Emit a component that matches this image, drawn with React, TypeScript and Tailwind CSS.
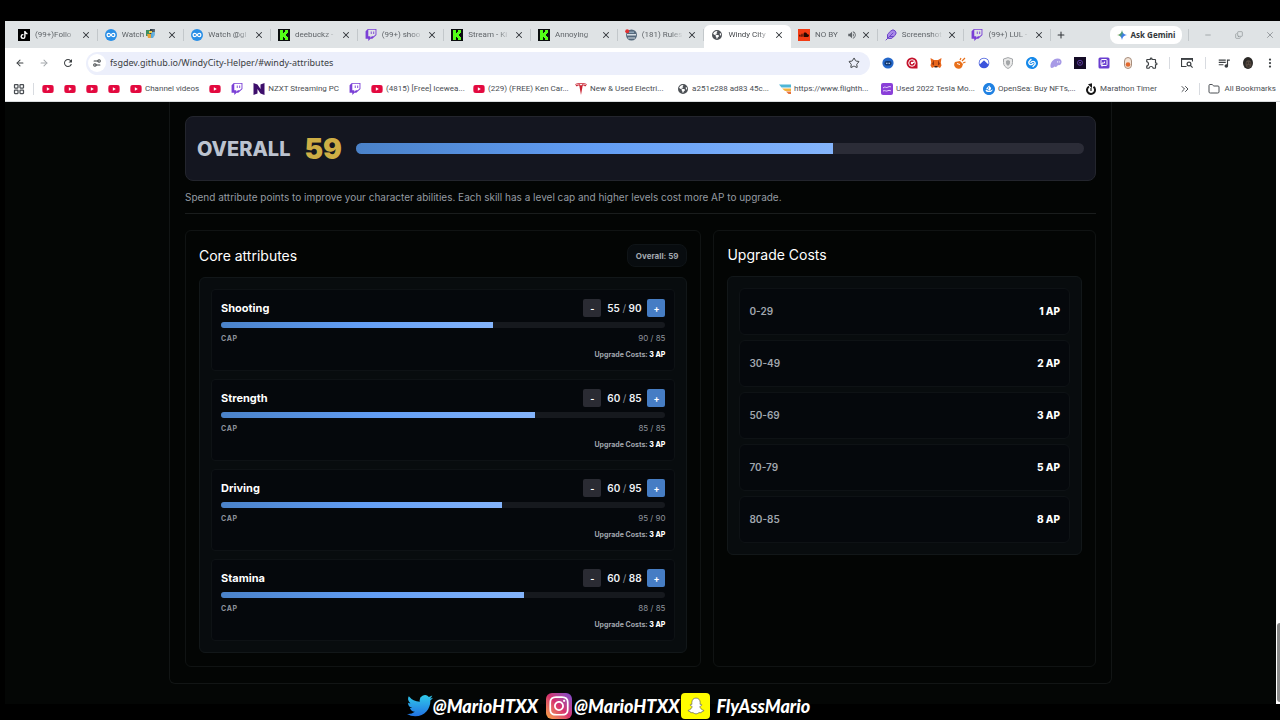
import { useState } from "react";
import type { ReactNode } from "react";
import {
  ArrowLeft,
  ArrowRight,
  ChevronsRight,
  Copy,
  EllipsisVertical,
  Feather,
  Folder,
  LayoutGrid,
  Minus,
  Plus,
  Settings2,
  Star,
  X,
} from "lucide-react";
import { FaEarthAmericas, FaInstagram, FaSoundcloud, FaTiktok, FaTwitch, FaYoutube } from "react-icons/fa6";
import { MdOutlineExtension, MdQueueMusic, MdRefresh, MdVolumeUp } from "react-icons/md";
import { SiOpensea, SiShazam, SiTesla } from "react-icons/si";

const KickIcon = () => (
  <svg viewBox="0 0 12 12" className="size-3">
    <rect width="12" height="12" fill="#0b0e0f" />
    <path d="M2 1h3v3h1V3h1V1h3v3H9v1H8v2h1v1h1v3H7V9H6V8H5v3H2z" fill="#53fc18" />
  </svg>
);

const LoopIcon = () => (
  <svg viewBox="0 0 12 12" className="size-3">
    <circle cx="6" cy="6" r="6" fill="#2a8fe6" />
    <path
      d="M6 6C5 4.600 4.500 4.300 3.800 4.300a1.700 1.700 0 0 0 0 3.400C4.500 7.700 5 7.400 6 6s1.500-1.700 2.200-1.700a1.700 1.700 0 0 1 0 3.400C7.500 7.700 7 7.400 6 6z"
      fill="none"
      stroke="#fff"
      strokeWidth="1.200"
    />
  </svg>
);

const RulesIcon = () => (
  <svg viewBox="0 0 12 12" className="size-3">
    <circle cx="6.500" cy="6" r="5.500" fill="#55697c" />
    <path d="M2 5h9v1.500H2zM3 8.500h7v1H3z" fill="#d5dde4" />
    <path d="M4 2.500h5v1.500H4z" fill="#8ea5b8" />
    <circle cx="2.200" cy="2.200" r="2" fill="#e03131" />
  </svg>
);

const CharactersIcon = () => (
  <svg viewBox="0 0 10 10" className="inline size-2.5 align-[-2px]">
    <rect width="5" height="6" y="1" fill="#3d8f5f" />
    <rect x="4" width="5" height="5" fill="#2b3a45" />
    <path d="M1 5h4v4H2z" fill="#e8a33a" />
    <path d="M6 3h3v3l-2 3H5V5z" fill="#4aa3d8" />
    <path d="M3 2h3v2H3z" fill="#f2cf4a" />
  </svg>
);

const SoundCloudIcon = () => (
  <span className="flex size-3 items-center justify-center bg-[#f23c14]">
    <FaSoundcloud className="size-2.5 text-[#260802]" />
  </span>
);

const YouTube = () => <FaYoutube className="size-3 text-[#e3093f]" />;
const Twitch = () => <FaTwitch className="size-3 text-[#7a3fd6]" />;

type Tab = { title: ReactNode; icon: ReactNode; active?: boolean; audio?: boolean };

const tabs: Tab[] = [
  {
    title: "(99+)Follo",
    icon: (
      <span className="flex size-3 items-center justify-center bg-black">
        <FaTiktok className="size-2 text-white" />
      </span>
    ),
  },
  { title: <>Watch <CharactersIcon /></>, icon: <LoopIcon /> },
  { title: "Watch @gl", icon: <LoopIcon /> },
  { title: "deebuckz -", icon: <KickIcon /> },
  { title: "(99+) shoo", icon: <Twitch /> },
  { title: "Stream - Ki", icon: <KickIcon /> },
  { title: "Annoying", icon: <KickIcon /> },
  { title: "(181) Rules", icon: <RulesIcon /> },
  { title: "Windy City", icon: <FaEarthAmericas className="size-2.5 text-[#4d5156]" />, active: true },
  { title: "NO BY", icon: <SoundCloudIcon />, audio: true },
  { title: "Screenshot", icon: <Feather className="size-3 fill-[#a98be8] text-[#6d45c9]" /> },
  { title: "(99+) LUL -", icon: <Twitch /> },
];

function TabStrip() {
  return (
    <div className="flex h-[27px] items-end bg-[#dfe3e5] pl-1.5 text-[#5f6468]">
      <div role="tablist" className="flex min-w-0 flex-1">
        {tabs.map((tab, i) => (
          <div
            key={i}
            role="tab"
            aria-selected={!!tab.active}
            className={
              tab.active
                ? "flex h-[23px] min-w-0 flex-1 rounded-t-md bg-white pb-[3px] text-[#46494d]"
                : "flex h-[23px] min-w-0 flex-1 pb-[3px]"
            }
          >
            <div
              className={
                tab.active
                  ? "my-1 flex min-w-0 flex-1 items-center pr-[7px] pl-1.5"
                  : "my-1 flex min-w-0 flex-1 items-center border-r border-[#c3c8cb] pr-1.5 pl-1.5"
              }
            >
              <span className="flex w-3.5 shrink-0 justify-center">{tab.icon}</span>
              <span className="ml-1 min-w-0 flex-1 overflow-hidden text-[8px] leading-3 whitespace-nowrap [mask-image:linear-gradient(to_right,black_70%,transparent)]">
                {tab.title}
              </span>
              {tab.audio && <MdVolumeUp className="size-2.5 shrink-0" />}
              <button aria-label="Close tab" className="ml-1 shrink-0 text-[#33373b]">
                <X className="size-2.5" strokeWidth={2.5} />
              </button>
            </div>
          </div>
        ))}
      </div>
      <div className="flex h-[27px] shrink-0 items-center">
        <button aria-label="New tab" className="flex w-5 justify-center text-[#33373b]">
          <Plus className="size-2.5" strokeWidth={2.5} />
        </button>
        <button className="ml-[39px] flex h-[18px] w-[72px] items-center justify-center gap-1 rounded-lg bg-white font-['Noto_Sans',sans-serif] text-[8px] font-bold text-[#33373b]">
          <svg viewBox="0 0 12 12" className="size-2.5">
            <defs>
              <linearGradient id="spark" x1="0" y1="0.200" x2="1" y2="0.800">
                <stop offset="0" stopColor="#e5a72c" />
                <stop offset="0.350" stopColor="#4a9d6e" />
                <stop offset="0.600" stopColor="#3b7ced" />
                <stop offset="1" stopColor="#2f64d8" />
              </linearGradient>
            </defs>
            <path d="M6 0c.5 3.600 2.400 5.500 6 6-3.600.5-5.500 2.400-6 6-.5-3.600-2.400-5.500-6-6 3.600-.5 5.500-2.400 6-6z" fill="url(#spark)" />
          </svg>
          Ask Gemini
        </button>
        <span className="ml-1.5 h-3 w-px bg-[#c3c8cb]" />
        <div className="ml-[9px] flex gap-[11px] text-[#8a8f93]">
          <button aria-label="Minimize" className="flex w-5 items-center justify-center">
            <Minus className="size-2" />
          </button>
          <button aria-label="Restore" className="flex w-5 items-center justify-center">
            <Copy className="size-2 -scale-x-100 rotate-180" />
          </button>
          <button aria-label="Close" className="flex w-5 items-center justify-center">
            <X className="size-2.5" />
          </button>
        </div>
      </div>
    </div>
  );
}

const extensions: { name: string; icon: ReactNode }[] = [
  {
    name: "Robot",
    icon: (
      <svg viewBox="0 0 12 12" className="size-3">
        <circle cx="6" cy="6" r="5.600" fill="#2467c9" />
        <rect x="2.500" y="4" width="7" height="4.500" rx="2" fill="#12386f" />
        <path d="M4 6.300h1.500M6.500 6.300H8" stroke="#cfe2ff" />
      </svg>
    ),
  },
  {
    name: "Target",
    icon: (
      <svg viewBox="0 0 12 12" className="size-3">
        <path d="M6 .5a5.500 5.500 0 1 0 0 11h5.500V6A5.500 5.500 0 0 0 6 .5z" fill="#c4132c" />
        <circle cx="6" cy="6" r="3.300" fill="none" stroke="#fff" />
        <path d="M6 6l2.500-2.500V6z" fill="#fff" />
        <circle cx="6" cy="6" r="1.200" fill="#fff" />
      </svg>
    ),
  },
  {
    name: "Fox",
    icon: (
      <svg viewBox="0 0 12 12" className="size-3">
        <path d="M.5 1l3.500 2h4l3.500-2-.7 4.500.7 3-1.500 2.500L8 10H4l-2 1L.5 8.500l.7-3z" fill="#e8661b" />
        <path d="M4 3L2 7l2 1.500zM8 3l2 4-2 1.500z" fill="#8c3410" />
        <path d="M4.500 9h3v1.500h-3z" fill="#3a2015" />
      </svg>
    ),
  },
  {
    name: "Comet",
    icon: (
      <svg viewBox="0 0 12 12" className="size-3">
        <path d="M1 5l5-1 3 3-1 3a4 4 0 0 1-7-5z" fill="#e8701b" />
        <path d="M6 3l1-2M8 4l3-3M9 6l2.500-1" stroke="#e8701b" strokeWidth="1.200" />
        <path d="M3 6.500l3 1" stroke="#fff" />
      </svg>
    ),
  },
  {
    name: "Peak",
    icon: (
      <svg viewBox="0 0 12 12" className="size-3">
        <circle cx="6" cy="6" r="5.300" fill="#3c55dc" />
        <path d="M1.800 7.500L6 3.500l4.200 4a4.500 4.500 0 1 0-8.400 0z" fill="#fff" />
        <path d="M6 3.500l4 4H2z" fill="#3c55dc" />
      </svg>
    ),
  },
  {
    name: "Shield",
    icon: (
      <svg viewBox="0 0 12 12" className="size-3">
        <path d="M6 .6l4.500 1.400v3.500c0 3-1.800 4.800-4.500 6-2.700-1.200-4.500-3-4.500-6V2z" fill="#e9e9e9" stroke="#a3a6a8" />
        <path d="M6 3l2 1v2c0 1.200-.8 2-2 2.700C4.800 8 4 7.200 4 6V4z" fill="#a3a6a8" />
      </svg>
    ),
  },
  { name: "Shazam", icon: <SiShazam className="size-3 text-[#1689ea]" /> },
  {
    name: "Phantom",
    icon: (
      <svg viewBox="0 0 12 12" className="size-3">
        <path d="M.5 10C0 6 3 1.500 7.500 1.500c3 0 4.500 1.800 4 4C11 8 9.500 8.500 8 8c-1 2-2.500 2.500-3.500 1.500C3.500 11 1 11.500.5 10z" fill="#a79ae6" />
        <path d="M7.500 4.300v1.200M9.300 4.300v1.200" stroke="#fff" strokeWidth=".8" />
      </svg>
    ),
  },
  {
    name: "Orbit",
    icon: (
      <svg viewBox="0 0 12 12" className="size-3">
        <rect width="12" height="12" fill="#140b26" />
        <circle cx="6" cy="5.800" r="2.500" fill="none" stroke="#5a3aa0" />
        <circle cx="6" cy="5.800" r=".8" fill="#7d5ac8" />
      </svg>
    ),
  },
  {
    name: "Pretzel",
    icon: (
      <svg viewBox="0 0 12 12" className="size-3">
        <rect x=".5" y=".5" width="11" height="11" rx="1.500" fill="#6a3fd0" />
        <rect x="3" y="2.500" width="6" height="6" rx="1" fill="none" stroke="#fff" />
        <path d="M4 9.500V6h2.500V4.500" fill="none" stroke="#fff" />
      </svg>
    ),
  },
  {
    name: "Capsule",
    icon: (
      <svg viewBox="0 0 12 12" className="size-3">
        <rect x="2.500" y=".5" width="7" height="11" rx="3.500" fill="#f3e3d6" stroke="#a68d7c" />
        <circle cx="6" cy="7.500" r="2.300" fill="#e2672d" />
      </svg>
    ),
  },
  { name: "Extensions", icon: <MdOutlineExtension className="size-3.5 text-[#3c4043]" /> },
];

function Toolbar() {
  return (
    <div className="flex h-[30px] items-center bg-white pl-[3px] text-[#3c4043]">
      <button aria-label="Back" className="flex w-6 justify-center">
        <ArrowLeft className="size-2.5" strokeWidth={2.5} />
      </button>
      <button aria-label="Forward" className="flex w-6 justify-center text-[#a3a7ab]">
        <ArrowRight className="size-2.5" strokeWidth={2.5} />
      </button>
      <button aria-label="Reload" className="flex w-6 justify-center">
        <MdRefresh className="size-3" />
      </button>
      <div className="ml-1.5 flex h-[23px] flex-1 items-center rounded-full bg-[#eceffb] pr-2.5 pl-0.5">
        <button aria-label="Site information" className="flex size-[18px] items-center justify-center rounded-full bg-white">
          <Settings2 className="size-2.5 -scale-y-100" strokeWidth={2.5} />
        </button>
        <input
          aria-label="Address"
          defaultValue="fsgdev.github.io/WindyCity-Helper/#windy-attributes"
          className="ml-1 min-w-0 flex-1 bg-transparent font-['Noto_Sans',sans-serif] text-[9px] text-[#3a3d42] outline-none"
        />
        <button aria-label="Bookmark this page">
          <Star className="size-3" />
        </button>
      </div>
      <div className="ml-1.5 flex shrink-0 items-center">
        {extensions.map((ext) => (
          <button key={ext.name} aria-label={ext.name} className="flex w-6 justify-center">
            {ext.icon}
          </button>
        ))}
        <span className="mx-[5px] h-3 w-px bg-[#d8dbe0]" />
        <button aria-label="Search side panel" className="flex w-6 justify-center">
          <svg viewBox="0 0 12 12" className="size-3" fill="none" stroke="currentColor" strokeWidth="1.200">
            <path d="M5.500 9.500h-5v-8h11v3" />
            <path d="M.5 2.300h11" />
            <circle cx="8" cy="7" r="1.900" />
            <path d="M9.400 8.400l2.200 2.300" />
          </svg>
        </button>
        <span className="mx-1.5 h-3 w-px bg-[#d8dbe0]" />
        <button aria-label="Media controls" className="flex w-6 justify-center">
          <MdQueueMusic className="size-3.5" />
        </button>
        <button aria-label="Profile" className="flex w-6 justify-center">
          <svg viewBox="0 0 12 12" className="size-3">
            <ellipse cx="6" cy="6" rx="5" ry="6" fill="#2a2826" />
            <ellipse cx="6.500" cy="7" rx="3" ry="3.800" fill="#54483f" />
            <path d="M4.500 6h1.500M7 6h1.500M5.500 9h2" stroke="#1b1816" strokeWidth=".8" />
          </svg>
        </button>
        <button aria-label="Menu" className="flex w-5 justify-center">
          <EllipsisVertical className="size-3" strokeWidth={2.5} />
        </button>
      </div>
    </div>
  );
}

const bookmarks: { icon: ReactNode; label?: string; name?: string; cut?: boolean }[] = [
  { icon: <YouTube />, name: "YouTube" },
  { icon: <YouTube />, name: "YouTube" },
  { icon: <YouTube />, name: "YouTube" },
  { icon: <YouTube />, name: "YouTube" },
  { icon: <YouTube />, label: "Channel videos" },
  { icon: <YouTube />, name: "YouTube" },
  { icon: <Twitch />, name: "Twitch" },
  {
    icon: (
      <svg viewBox="0 0 12 12" className="size-3">
        <path d="M.5 0l4 1.500 3 4.500V1.500L11.500 0v12l-4-1.500-3-4.500v4.500L.5 12z" fill="#3d0e6b" />
      </svg>
    ),
    label: "NZXT Streaming PC",
  },
  { icon: <Twitch />, name: "Twitch" },
  { icon: <YouTube />, label: "(4815) [Free] Icewea...", cut: true },
  { icon: <YouTube />, label: "(229) (FREE) Ken Car...", cut: true },
  { icon: <SiTesla className="size-3 text-[#c8202f]" />, label: "New & Used Electri...", cut: true },
  { icon: <FaEarthAmericas className="size-2.5 text-[#4d5156]" />, label: "a251e288 ad83 45c...", cut: true },
  {
    icon: (
      <svg viewBox="0 0 12 12" className="size-3">
        <path d="M0 1.500h12v3H2.500z" fill="#4fb6d6" />
        <path d="M3 5.500h9v2.500H6z" fill="#f2b33d" />
        <path d="M7 8.500h5V11H9.500z" fill="#e8743b" />
      </svg>
    ),
    label: "https://www.flighth...",
    cut: true,
  },
  {
    icon: (
      <svg viewBox="0 0 12 12" className="size-3">
        <rect width="12" height="12" rx="2" fill="#8a3fd8" />
        <path d="M2 5c2-2 3 0 4-.5S9 3 10 4M2 8c2-1 3 .5 4 0s3-1 4 0" fill="none" stroke="#e6d5fa" />
      </svg>
    ),
    label: "Used 2022 Tesla Mo...",
    cut: true,
  },
  { icon: <SiOpensea className="size-3 text-[#2081e2]" />, label: "OpenSea: Buy NFTs,...", cut: true },
  {
    icon: (
      <svg viewBox="0 0 12 12" className="size-3">
        <path d="M4 3.500a4 4 0 1 0 4.500.3" fill="none" stroke="#161616" strokeWidth="2" />
        <path d="M3 1.200l4-1v5z" fill="#161616" />
        <path d="M6 5v3" stroke="#161616" strokeWidth="1.200" />
      </svg>
    ),
    label: "Marathon Timer",
  },
];

function BookmarksBar() {
  return (
    <div className="flex h-[23px] items-center bg-white pr-1 pb-0.5 pl-2 text-[8px] whitespace-nowrap text-[#4a4e53]">
      <button aria-label="Apps">
        <LayoutGrid className="size-3" strokeWidth={2.5} />
      </button>
      <span className="ml-2 h-3 w-px shrink-0 bg-[#d8dbe0]" />
      <nav className="ml-2 flex min-w-0 flex-1 items-center gap-2.5 overflow-hidden">
        {bookmarks.map((b, i) => (
          <a key={i} href="#" aria-label={b.name} className="flex shrink-0 items-center gap-[3px]">
            <span className="flex w-3 justify-center">{b.icon}</span>
            {b.label && <span className={b.cut ? "w-[77px]" : ""}>{b.label}</span>}
          </a>
        ))}
      </nav>
      <button aria-label="More bookmarks">
        <ChevronsRight className="size-3" />
      </button>
      <span className="mx-2 h-3 w-px shrink-0 bg-[#d8dbe0]" />
      <button className="flex items-center gap-1">
        <Folder className="size-3" />
        All Bookmarks
      </button>
    </div>
  );
}

const SKILL_LIMIT = 85;

const initialSkills = [
  { name: "Shooting", level: 55, cap: 90, limit: SKILL_LIMIT },
  { name: "Strength", level: 60, cap: 85, limit: SKILL_LIMIT },
  { name: "Driving", level: 60, cap: 95, limit: 90 },
  { name: "Stamina", level: 60, cap: 88, limit: SKILL_LIMIT },
];

const costs = [
  { range: "0-29", max: 29, ap: 1 },
  { range: "30-49", max: 49, ap: 2 },
  { range: "50-69", max: 69, ap: 3 },
  { range: "70-79", max: 79, ap: 5 },
  { range: "80-85", max: 85, ap: 8 },
];

function costFor(level: number) {
  return (costs.find((c) => level <= c.max) ?? costs[costs.length - 1]).ap;
}

function SkillRow({ skill, onChange }: { skill: (typeof initialSkills)[number]; onChange: (delta: number) => void }) {
  return (
    <div className="rounded-sm border border-[#0e1215] bg-[#05080c] p-[9px]">
      <div className="flex h-[18px] items-center">
        <h3 className="flex-1 text-[11px] font-bold text-white">{skill.name}</h3>
        <button
          aria-label={`Lower ${skill.name}`}
          onClick={() => onChange(-1)}
          className="size-[18px] rounded-xs bg-[#2a2b33] text-[9px] leading-none font-bold text-white"
        >
          -
        </button>
        <span className="w-[46px] text-center text-[10px] font-semibold text-[#eef1f6]">
          {skill.level} <span className="font-normal text-[#8a8f98]">/</span> {skill.cap}
        </span>
        <button
          aria-label={`Raise ${skill.name}`}
          onClick={() => onChange(1)}
          className="size-[18px] rounded-xs bg-[#467dc4] text-[9px] leading-none font-bold text-white"
        >
          +
        </button>
      </div>
      <div className="mt-[5px] h-1.5 overflow-hidden rounded-full bg-[#16191e]">
        <div
          className="h-full bg-linear-to-r from-[#4a82c9] via-[#629df4] to-[#84b4fb]"
          style={{ width: `${(skill.level / skill.cap) * 100}%` }}
        />
      </div>
      <div className="mt-1 flex h-[13px] items-baseline justify-between leading-[13px] text-[#8d939c]">
        <span className="text-[7px] font-bold tracking-widest">CAP</span>
        <span className="text-[8px]">
          {skill.cap} / {skill.limit}
        </span>
      </div>
      <div className="mt-1 text-right text-[7px] leading-3 font-bold text-[#a0a6ae]">
        Upgrade Costs: <span className="font-extrabold text-white">{costFor(skill.level)} AP</span>
      </div>
    </div>
  );
}

function Attributes() {
  const [skills, setSkills] = useState(initialSkills);
  const overall = Math.round(skills.reduce((sum, s) => sum + s.level, 0) / skills.length);

  function change(index: number, delta: number) {
    setSkills((prev) =>
      prev.map((s, i) => (i === index ? { ...s, level: Math.min(s.cap, Math.max(0, s.level + delta)) } : s)),
    );
  }

  return (
    <main className="mx-auto w-full max-w-[943px] rounded-b-md border border-t-0 border-[#121515] bg-[#030504] px-[15px] pt-3.5 pb-4">
      <section className="flex h-[65px] items-center rounded-lg border border-[#23252d] bg-[#141620] px-[11px]">
        <span className="text-[20px] font-extrabold text-[#bcc3cf]">OVERALL</span>
        <span className="ml-3.5 text-[28px] font-black text-[#ceae45]">{overall}</span>
        <div className="ml-3.5 h-[11px] flex-1 overflow-hidden rounded-full bg-[#2b2c37]">
          <div
            className="h-full bg-linear-to-r from-[#4a82c9] via-[#629df4] to-[#84b4fb]"
            style={{ width: `${(overall / 90) * 100}%` }}
          />
        </div>
      </section>
      <p className="mt-[7px] border-b border-[#1a1d1d] pb-[7px] text-[10px] leading-[18px] text-[#959ba2]">
        Spend attribute points to improve your character abilities. Each skill has a level cap and higher levels cost
        more AP to upgrade.
      </p>

      <div className="mt-4 grid grid-cols-[1.35fr_1fr] gap-3">
        <section className="rounded-md border border-[#101313] p-[13px]">
          <div className="flex h-[23px] items-center justify-between">
            <h2 className="text-[14px] font-normal text-white">Core attributes</h2>
            <span className="flex h-[23px] items-center rounded-lg border border-[#0f1417] bg-[#080c0f] px-2 text-[8px] font-bold text-[#a3a9b0]">
              Overall: {overall}
            </span>
          </div>
          <div className="mt-2.5 flex flex-col gap-2 rounded-md border border-[#121719] bg-[#080c0e] p-[11px]">
            {skills.map((skill, i) => (
              <SkillRow key={skill.name} skill={skill} onChange={(delta) => change(i, delta)} />
            ))}
          </div>
        </section>

        <section className="rounded-md border border-[#101313] p-[13px]">
          <h2 className="text-[14px] leading-[22px] font-normal text-white">Upgrade Costs</h2>
          <ul className="mt-2.5 flex flex-col gap-[5px] rounded-md border border-[#121719] bg-[#080c0e] p-[11px]">
            {costs.map((c) => (
              <li
                key={c.range}
                className="flex h-[47px] items-center justify-between rounded-md border border-[#0e1215] bg-[#05080c] px-[9px] text-[10px]"
              >
                <span className="font-semibold text-[#a0a6ae]">{c.range}</span>
                <span className="font-extrabold text-white">{c.ap} AP</span>
              </li>
            ))}
          </ul>
        </section>
      </div>
    </main>
  );
}

function SocialBar() {
  return (
    <footer className="relative -mt-3 flex h-[27px] items-center justify-center pr-[68px] font-['Lato','Liberation_Sans',sans-serif] text-[18px] leading-none font-black text-white italic">
      <svg viewBox="0 0 24 20" className="h-[22px] w-[26px]">
        <defs>
          <linearGradient id="bird" x1="0" y1="0" x2="0" y2="1">
            <stop offset="0" stopColor="#2fc9ea" />
            <stop offset="1" stopColor="#2272e4" />
          </linearGradient>
        </defs>
        <path
          d="M24 2.370a9.800 9.800 0 0 1-2.830.770A4.930 4.930 0 0 0 23.340.420a9.860 9.860 0 0 1-3.130 1.190 4.920 4.920 0 0 0-8.380 4.480A13.970 13.970 0 0 1 1.670.940a4.930 4.930 0 0 0 1.520 6.570 4.900 4.900 0 0 1-2.230-.610v.060a4.930 4.930 0 0 0 3.950 4.830 4.940 4.940 0 0 1-2.220.080 4.930 4.930 0 0 0 4.600 3.420A9.880 9.880 0 0 1 0 17.330a13.940 13.940 0 0 0 7.550 2.210c9.050 0 14-7.500 14-13.990 0-.210 0-.420-.020-.630A10 10 0 0 0 24 2.370z"
          fill="url(#bird)"
        />
      </svg>
      <span>@MarioHTXX</span>
      <span className="ml-2 flex size-[26px] items-center justify-center rounded-md bg-linear-to-tr from-[#f9a63a] via-[#d62f6d] to-[#7b45d3]">
        <FaInstagram className="size-[22px]" />
      </span>
      <span className="ml-0.5">@MarioHTXX</span>
      <span className="ml-0.5 flex h-[26px] w-[29px] items-center justify-center rounded-sm bg-[#fffc00]">
        <svg viewBox="0 0 24 24" className="size-5">
          <path
            d="M12 2.500c3.200 0 5 2.300 5 5.300 0 .8-.1 1.600-.1 2.200.4.300 1.100-.1 1.600.1.800.300.6 1.100-.1 1.500-.7.4-1.600.5-1.700 1.200-.1 1.300 2.300 4.100 4.800 4.500.3.800-1.300 1.300-2.600 1.500-.3.300-.2 1.200-.6 1.300-.8.100-1.800-.4-2.900 0-1.100.5-1.800 1.400-3.400 1.400s-2.300-.9-3.400-1.400c-1.100-.4-2.100.1-2.900 0-.4-.1-.3-1-.6-1.300-1.300-.2-2.900-.7-2.600-1.500 2.500-.4 4.900-3.200 4.800-4.500-.1-.7-1-.8-1.700-1.200-.7-.4-.9-1.200-.1-1.500.5-.2 1.200.2 1.600-.1 0-.6-.1-1.400-.1-2.200 0-3 1.800-5.300 5-5.300z"
            fill="#fff"
            stroke="#555"
            strokeWidth="0.800"
          />
        </svg>
      </span>
      <span className="ml-1.5">FlyAssMario</span>
    </footer>
  );
}

export default function App() {
  return (
    <div className="flex min-h-screen flex-col bg-black pt-[21px] pl-[5px]">
      <header className="border-b border-[#d9dcde] font-['Roboto','Noto_Sans',sans-serif]">
        <TabStrip />
        <Toolbar />
        <BookmarksBar />
      </header>
      <div className="flex">
        <div className="min-w-0 flex-1 bg-[#040605] pb-5 font-['Inter',sans-serif]">
          <Attributes />
        </div>
        <div className="flex w-1 flex-col justify-end bg-white pb-0.5 pl-px">
          <div className="h-[79px] w-full rounded-l-full bg-[#8b8b8b]" />
        </div>
      </div>
      <SocialBar />
    </div>
  );
}
